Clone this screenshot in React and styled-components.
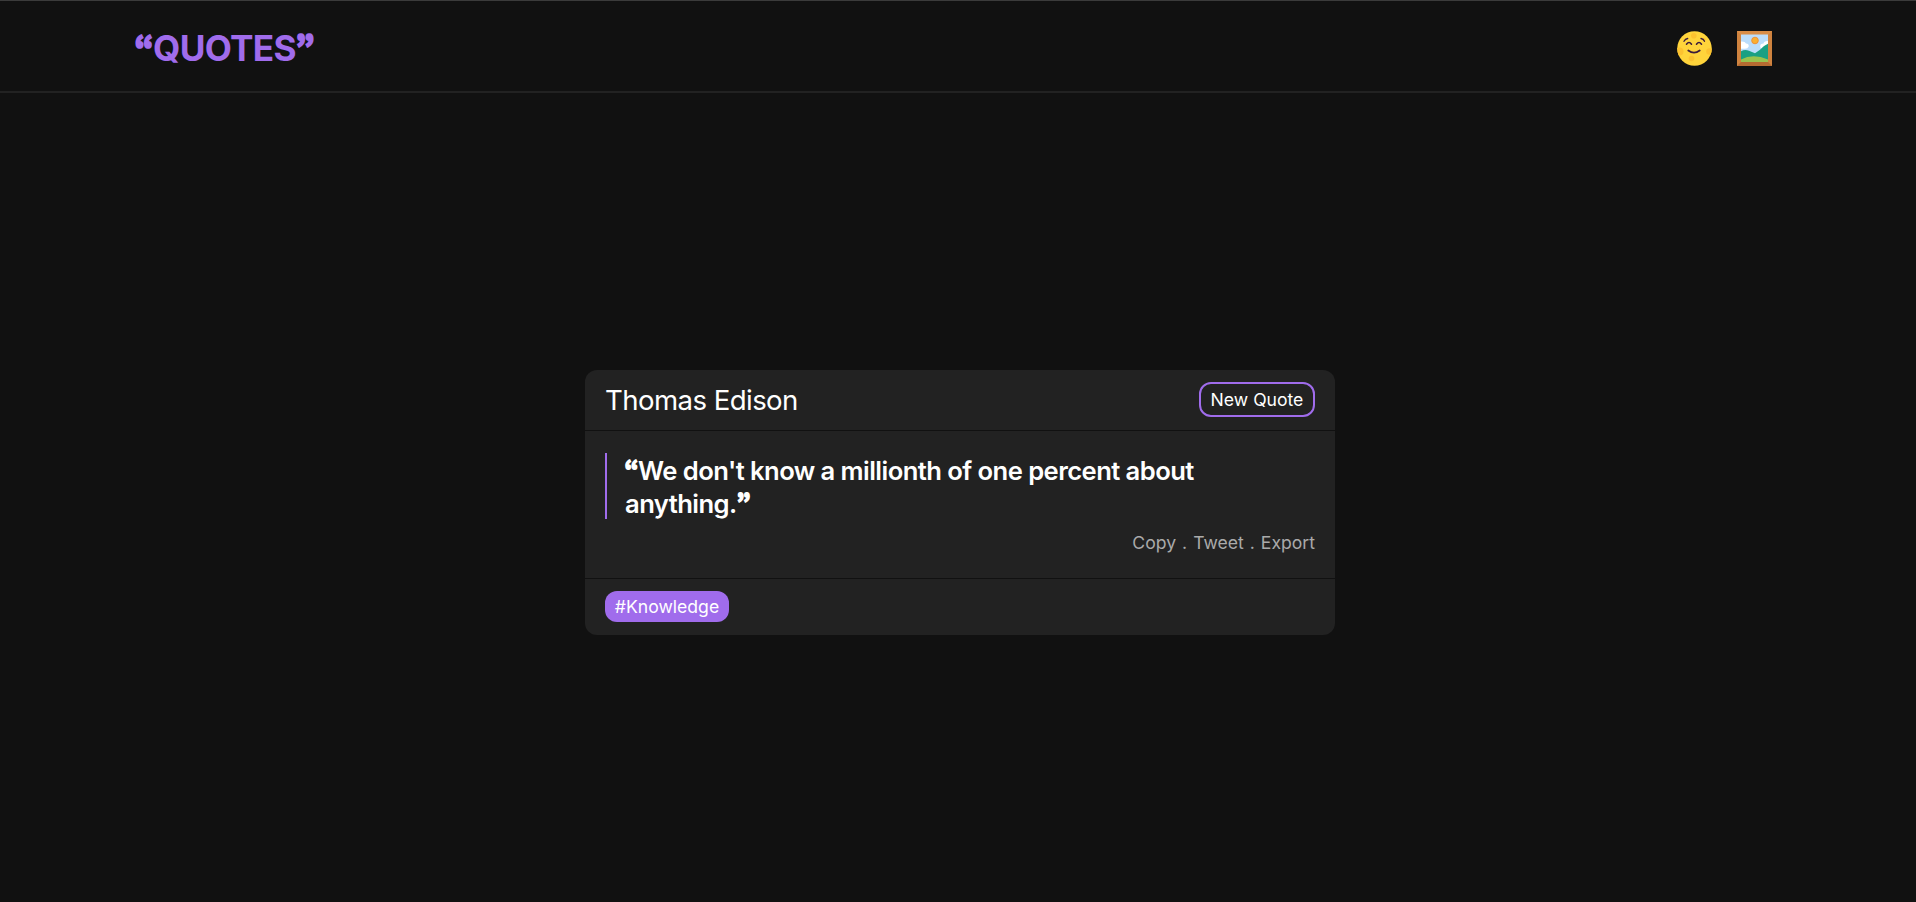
import React from "react";
import styled, { createGlobalStyle } from "styled-components";

const GlobalStyle = createGlobalStyle`
  *, *::before, *::after { box-sizing: border-box; }
  body {
    margin: 0;
    background: #111;
    color: #fff;
    font-family: Inter, "Liberation Sans", sans-serif;
    font-size: 17.6px;
  }
`;

const Page = styled.div`
  display: flex;
  flex-direction: column;
  height: 902px;
  border-top: 1px solid #3b3b3b;
`;

const Header = styled.header`
  display: flex;
  align-items: center;
  justify-content: space-between;
  height: 92px;
  padding: 5px 144px 0 135px;
  border-bottom: 2px solid #222;
`;

const Logo = styled.h1`
  display: flex;
  align-items: baseline;
  margin: 0 0 1px;
  font-size: 35.2px;
  font-weight: 700;
  line-height: 44px;
  letter-spacing: -0.02em;
  color: #a06cec;
`;

const Mark = styled.span`
  display: inline-flex;
  justify-content: center;
  width: ${(p) => p.$width}px;
  font-family: "Noto Sans CJK JP", sans-serif;
  font-size: ${(p) => p.$size}px;
  font-weight: 900;
  line-height: 1;
  letter-spacing: 0;
  white-space: nowrap;
  transform: translateY(-0.08em) scaleX(0.97);
  -webkit-text-stroke: 0.06em currentColor;
`;

const Actions = styled.nav`
  display: flex;
  gap: 25px;
`;

const IconButton = styled.button`
  display: flex;
  padding: 0;
  border: 0;
  background: none;
  cursor: pointer;
`;

const Main = styled.main`
  display: flex;
  flex: 1;
  align-items: center;
  justify-content: center;
  padding: 9px 0 0 4px;
`;

const Card = styled.article`
  width: 750px;
  height: 265px;
  border-radius: 12px;
  background: #222;
`;

const CardHeader = styled.div`
  display: flex;
  align-items: center;
  justify-content: space-between;
  height: 61px;
  padding: 0 20px 2px;
  border-bottom: 1px solid #111;
`;

const Author = styled.h2`
  margin: 0;
  padding-top: 3px;
  font-size: 27.6px;
  font-weight: 400;
  line-height: 34px;
  letter-spacing: -0.57px;
`;

const NewQuote = styled.button`
  height: 35px;
  width: 116px;
  margin-top: 2px;
  padding: 0;
  border: 2px solid #a06cec;
  border-radius: 12px;
  background: transparent;
  color: #fff;
  font: inherit;
`;

const CardBody = styled.div`
  height: 148px;
  padding: 22px 20px 0;
  border-bottom: 1px solid #111;
`;

const Quote = styled.blockquote`
  margin: 0;
  padding: 1px 0 0 18px;
  height: 66px;
  border-left: 2px solid #a06cec;
  font-size: 25.6px;
  font-weight: 600;
  line-height: 33px;
  letter-spacing: -0.56px;
`;

const NoBreak = styled.span`
  white-space: nowrap;
`;

const Links = styled.div`
  display: flex;
  justify-content: flex-end;
  gap: 6px;
  margin-top: 13px;
  line-height: 22px;
  color: #aaa;
`;

const CardFooter = styled.div`
  display: flex;
  padding: 12px 20px;
`;

const Tag = styled.span`
  width: 124px;
  height: 31px;
  border-radius: 12px;
  background: #a06cec;
  line-height: 31px;
  text-align: center;
`;

const SmileIcon = () => (
  <svg width="35" height="35" viewBox="0 0 35 35" aria-label="Emoji">
    <defs>
      <clipPath id="face">
        <circle cx="17.5" cy="17.5" r="17.3" />
      </clipPath>
    </defs>
    <g clipPath="url(#face)">
      <path d="M0 0h35v35H0z" fill="#ffd43b" />
      <g fill="#fcc230">
        <circle cx="16.8" cy="4.8" r="2.8" />
        <circle cx="2.5" cy="20.5" r="4" />
        <circle cx="14.5" cy="27.5" r="2.8" />
        <circle cx="32.5" cy="20.5" r="3.3" />
        <circle cx="27" cy="8.5" r="1.6" />
      </g>
    </g>
    <g fill="none" stroke="#3b1c3c" strokeLinecap="round">
      <path d="M9.5 13.2q2.5-3.3 5 0M19.5 13.2q2.5-3.3 5 0" strokeWidth="1.6" />
      <path d="M7 10.3q1.2-2.5 3.7-2.8M24 7.5q2.5.3 3.5 2.8" strokeWidth="1.3" />
      <path d="M11.3 19.5q5.7 4.3 11.4 0" strokeWidth="1.8" />
    </g>
  </svg>
);

const PictureIcon = () => (
  <svg width="35" height="35" viewBox="0 0 35 35" aria-label="Picture">
    <path d="M0 0h35v35H0z" fill="#cf833f" />
    <path d="M0 0h35l-4 4H4z" fill="#d98d47" />
    <path d="M0 35h35l-4-4H4z" fill="#b66b31" />
    <path d="M4 3.5h27V31H4z" fill="#bbddfb" />
    <circle cx="18" cy="9.5" r="3.3" fill="#fbb031" stroke="#ee9138" />
    <path d="M4 10.5q4-.4 5 2 3 .2 2.7 3-1 2.2-3.7 2.2H4zM31 10q-4-.3-4.5 2.5-3.5 0-3.3 3 .3 2.5 3.3 2.5H31z" fill="#fff" />
    <path d="M4 20.2q4-2.2 8-.5l6 2.5 5-3.5q4-4.5 8-6V31H4z" fill="#1aa083" />
    <path d="M4 28.5q12-6.5 27 0V31H4z" fill="#99c34e" />
  </svg>
);

export default function App() {
  return (
    <>
      <GlobalStyle />
      <Page>
        <Header>
          <Logo>
            <Mark $size={31} $width={18}>“</Mark>
            QUOTES
            <Mark $size={31} $width={18}>”</Mark>
          </Logo>
          <Actions>
            <IconButton><SmileIcon /></IconButton>
            <IconButton><PictureIcon /></IconButton>
          </Actions>
        </Header>
        <Main>
          <Card>
            <CardHeader>
              <Author>Thomas Edison</Author>
              <NewQuote>New Quote</NewQuote>
            </CardHeader>
            <CardBody>
              <Quote>
                <Mark $size={23} $width={13}>“</Mark>
                We don't know a millionth of one percent about{" "}
                <NoBreak>
                  anything.
                  <Mark $size={23} $width={13}>”</Mark>
                </NoBreak>
              </Quote>
              <Links>
                <span>Copy</span>
                <span>.</span>
                <span>Tweet</span>
                <span>.</span>
                <span>Export</span>
              </Links>
            </CardBody>
            <CardFooter>
              <Tag>#Knowledge</Tag>
            </CardFooter>
          </Card>
        </Main>
      </Page>
    </>
  );
}
